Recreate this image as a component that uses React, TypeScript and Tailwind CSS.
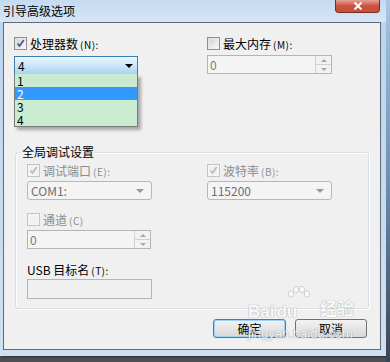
const FONT = { fontFamily: '"Noto Sans CJK SC", "Liberation Sans", sans-serif' };

function CheckBox({ checked, disabled }: { checked?: boolean; disabled?: boolean }) {
  return (
    <span
      className={`relative inline-block h-[13px] w-[13px] shrink-0 border ${
        disabled ? "border-[#c4c4c4] bg-[#f4f4f4]" : "border-[#8e8f8f] bg-gradient-to-br from-[#dcdcdc] to-[#f8f8f8]"
      }`}
    >
      <span
        className={`absolute inset-[2px] ${
          disabled ? "bg-[#f0f0f0]" : "bg-gradient-to-br from-[#d4d4d4] to-[#f6f6f6]"
        }`}
      />
      {checked && (
        <svg viewBox="0 0 11 11" className="absolute inset-0 h-[11px] w-[11px]">
          <path
            d="M2.5 5.5 L4.5 8 L8.8 2"
            fill="none"
            stroke={disabled ? "#bdbdbd" : "#4a5f97"}
            strokeWidth="1.8"
          />
        </svg>
      )}
    </span>
  );
}

function Label({
  text,
  hint,
  checked,
  disabled,
  box = true,
}: {
  text: string;
  hint: string;
  checked?: boolean;
  disabled?: boolean;
  box?: boolean;
}) {
  return (
    <div className={`flex h-[13px] items-center gap-[3px] text-[12px] leading-[13px] ${disabled ? "text-[#8d8d8d]" : "text-black"}`}>
      {box && <CheckBox checked={checked} disabled={disabled} />}
      <span className="whitespace-nowrap">
        {text}
        <span className="ml-[2px] text-[10px] tracking-[0.5px]">{hint}</span>
      </span>
    </div>
  );
}

function SpinBox({ value, width }: { value: string; width: string }) {
  return (
    <div className={`flex h-[19px] ${width} border border-[#b5b5b5] bg-[#f4f4f4]`}>
      <div className="flex-1 pl-[2px] text-[12px] leading-[17px] text-[#7a7a7a]">{value}</div>
      <div className="flex w-[16px] flex-col border-l border-[#d2d2d2]">
        <div className="flex flex-1 items-center justify-center border-b border-[#d2d2d2] bg-[#f2f2f2]">
          <span className="h-0 w-0 border-x-[3px] border-b-[3px] border-x-transparent border-b-[#a8a8a8]" />
        </div>
        <div className="flex flex-1 items-center justify-center bg-[#f2f2f2]">
          <span className="h-0 w-0 border-x-[3px] border-t-[3px] border-x-transparent border-t-[#a8a8a8]" />
        </div>
      </div>
    </div>
  );
}

function Combo({ value }: { value: string }) {
  return (
    <div className="flex h-[19px] w-[125px] items-center rounded-[3px] border border-[#b8b8b8] bg-[#f4f4f4] pl-[3px] pr-[7px]">
      <span className="flex-1 text-[12px] leading-[17px] text-[#6f6f6f]">{value}</span>
      <span className="h-0 w-0 border-x-[4px] border-t-[4px] border-x-transparent border-t-[#9a9a9a]" />
    </div>
  );
}

function Button({ text, focused }: { text: string; focused?: boolean }) {
  return (
    <div
      className={`flex h-[19px] items-center justify-center rounded-[3px] border bg-gradient-to-b from-[#f2f2f2] to-[#d9d9d9] text-[12px] text-black ${
        focused ? "w-[73px] border-[#3c7fb1] shadow-[inset_0_0_0_1px_#9ad3f5]" : "w-[72px] border-[#707070]"
      }`}
    >
      {text}
    </div>
  );
}

export default function App() {
  return (
    <div className="relative h-[362px] w-[390px] overflow-hidden bg-[#4b5057]" style={FONT}>
      <div className="absolute right-0 top-0 h-[362px] w-[4px] bg-gradient-to-b from-[#a8c6e6] via-[#6c8fb4] to-[#3a4553]" />
      <div className="flex h-[356px] w-[386px] flex-col bg-gradient-to-b from-[#bcd4ee] to-[#cfe0f3] shadow-[1px_1px_2px_rgba(0,0,0,0.4)]">
        {/* title bar */}
        <div className="relative flex h-[22px] items-center bg-gradient-to-b from-[#c5daf1] to-[#d7e6f6] pl-[3px]">
          <span className="text-[12px] leading-[14px] text-black">引导高级选项</span>
          <div className="absolute right-[6px] top-0 flex h-[13px] w-[45px] items-center justify-center rounded-b-[4px] border border-t-0 border-[#7a2b22] bg-gradient-to-b from-[#e4a195] via-[#c8513f] to-[#c4503c]">
            <svg viewBox="0 0 10 8" className="h-[8px] w-[10px]">
              <path d="M1.5 0.5 L8.5 7.5 M8.5 0.5 L1.5 7.5" stroke="white" strokeWidth="2" />
            </svg>
          </div>
        </div>

        {/* client area */}
        <div className="relative mx-[3px] flex h-[328px] w-[378px] flex-col border border-[#5f6a75] bg-[#f0f0f0] px-[10px] pt-[14px]">
          <div className="grid grid-cols-[124px_125px] gap-x-[69px]">
            <div className="flex flex-col">
              <Label text="处理器数" hint="(N):" checked />
              <div className="relative mt-[6px]">
                <div className="flex h-[19px] w-[124px] items-center border border-[#3c7fb1] bg-gradient-to-b from-[#eaf6fd] via-[#c9e6f9] to-[#a7d4f3] pl-[3px] pr-[4px]">
                  <span className="flex-1 text-[12px] leading-[17px] text-black">4</span>
                  <span className="h-0 w-0 border-x-[4px] border-t-[4px] border-x-transparent border-t-black" />
                </div>
                <div className="absolute left-0 top-[18px] z-10 w-[124px] border border-[#7a7a7a] border-t-0 bg-[#c9ebcf] shadow-[3px_3px_3px_rgba(0,0,0,0.3)]">
                  {["1", "2", "3", "4"].map((n) => (
                    <div
                      key={n}
                      className={`h-[13px] pl-[2px] text-[12px] leading-[13px] ${n === "2" ? "bg-[#3399ff] text-white" : "text-black"}`}
                    >
                      {n}
                    </div>
                  ))}
                </div>
              </div>
            </div>
            <div className="flex flex-col">
              <Label text="最大内存" hint="(M):" />
              <div className="mt-[5px]">
                <SpinBox value="0" width="w-[125px]" />
              </div>
            </div>
          </div>

          {/* group box */}
          <div className="relative ml-[1px] mt-[77px] h-[157px] w-[354px] rounded-[3px] border border-[#d5dfe5] shadow-[inset_1px_1px_0_#ffffff,1px_1px_0_#ffffff] px-[11px] pt-[11px]">
            <span className="absolute left-[5px] top-[-8px] bg-[#f0f0f0] px-[1px] text-[12px] leading-[14px] text-black">
              全局调试设置
            </span>
            <div className="grid grid-cols-[124px_125px] gap-x-[56px]">
              <div className="flex flex-col">
                <Label text="调试端口" hint="(E):" checked disabled />
                <div className="mt-[4px]">
                  <Combo value="COM1:" />
                </div>
                <div className="mt-[13px]">
                  <Label text="通道" hint="(C)" disabled />
                </div>
                <div className="mt-[4px]">
                  <SpinBox value="0" width="w-[124px]" />
                </div>
                <div className="mt-[14px]">
                  <Label text="USB 目标名" hint="(T):" box={false} />
                </div>
                <div className="mt-[3px] h-[20px] w-[125px] border border-[#b5b5b5] bg-[#f0f0f0]" />
              </div>
              <div className="flex flex-col">
                <Label text="波特率" hint="(B):" checked disabled />
                <div className="mt-[4px]">
                  <Combo value="115200" />
                </div>
              </div>
            </div>
          </div>

          <div className="mt-[10px] flex justify-end gap-[9px] pr-[3px]">
            <Button text="确定" focused />
            <Button text="取消" />
          </div>

          {/* watermark */}
          <div className="pointer-events-none absolute left-[244px] top-[263px] text-white opacity-70 [text-shadow:0_0_1px_#8a8a8a,0_0_1px_#8a8a8a]">
            <svg viewBox="0 0 28 18" className="absolute left-[37px] top-[0px] h-[18px] w-[28px]">
              <g fill="white" stroke="#9a9a9a" strokeWidth="0.6">
                <ellipse cx="6" cy="8" rx="2.6" ry="3.2" />
                <ellipse cx="11" cy="3.5" rx="2.6" ry="3.2" />
                <ellipse cx="17" cy="3.5" rx="2.6" ry="3.2" />
                <ellipse cx="22" cy="8" rx="2.6" ry="3.2" />
              </g>
            </svg>
            <div className="absolute left-0 top-[17px] whitespace-nowrap text-[17px] font-bold leading-[18px]" style={{ fontFamily: '"Liberation Sans", sans-serif' }}>
              Bai<span className="ml-[2px]">du</span>
            </div>
            <div className="absolute left-[72px] top-[13px] whitespace-nowrap text-[17px] font-bold leading-[18px]">经验</div>
            <div className="absolute left-[0px] top-[41px] whitespace-nowrap text-[13px] leading-[13px]" style={{ fontFamily: '"Liberation Sans", sans-serif' }}>
              jingyan.baidu.com
            </div>
          </div>
        </div>
      </div>
    </div>
  );
}
